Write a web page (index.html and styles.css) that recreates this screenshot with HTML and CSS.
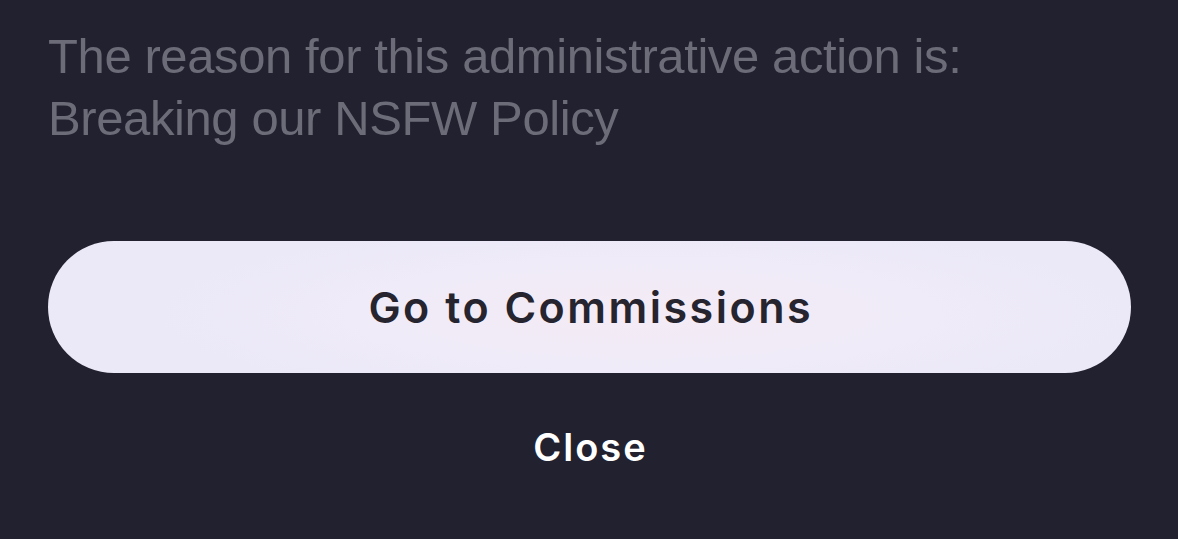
FILE: index.html
```html
<!DOCTYPE html>
<html>
<head>
<meta charset="utf-8">
<link rel="stylesheet" href="styles.css">
</head>
<body>
<div class="sheet">
  <p class="reason">The reason for this administrative action is:<br>Breaking our NSFW Policy</p>
  <button class="primary">Go to Commissions</button>
  <button class="close">Close</button>
</div>
</body>
</html>
```
FILE: styles.css
```css
html, body {
  margin: 0;
  padding: 0;
  background: #22212f;
  height: 100%;
}
.sheet {
  display: flex;
  flex-direction: column;
  padding: 0 47px 0 48px;
  font-family: "Liberation Sans", Arial, sans-serif;
}
.reason {
  margin: 25px 0 0 0;
  font-size: 49px;
  line-height: 62px;
  color: #6c6b78;
  letter-spacing: -0.4px;
}
.primary {
  margin-top: 92px;
  height: 132px;
  border: none;
  border-radius: 66px;
  background: radial-gradient(ellipse 45% 70% at 55% 55%, #f4ebf5 0%, #efebf8 60%, #ebe8f8 100%);
  color: #25242f;
  font-family: Inter, "Liberation Sans", sans-serif;
  font-weight: 600;
  font-size: 43px;
  letter-spacing: 2.5px;
  text-indent: 2.5px;
  padding: 0;
}
.close {
  margin-top: 51px;
  align-self: center;
  border: none;
  background: none;
  color: #ffffff;
  font-family: Inter, "Liberation Sans", sans-serif;
  font-weight: 600;
  font-size: 38px;
  letter-spacing: 2px;
  text-indent: 2px;
  padding: 0;
}
```
